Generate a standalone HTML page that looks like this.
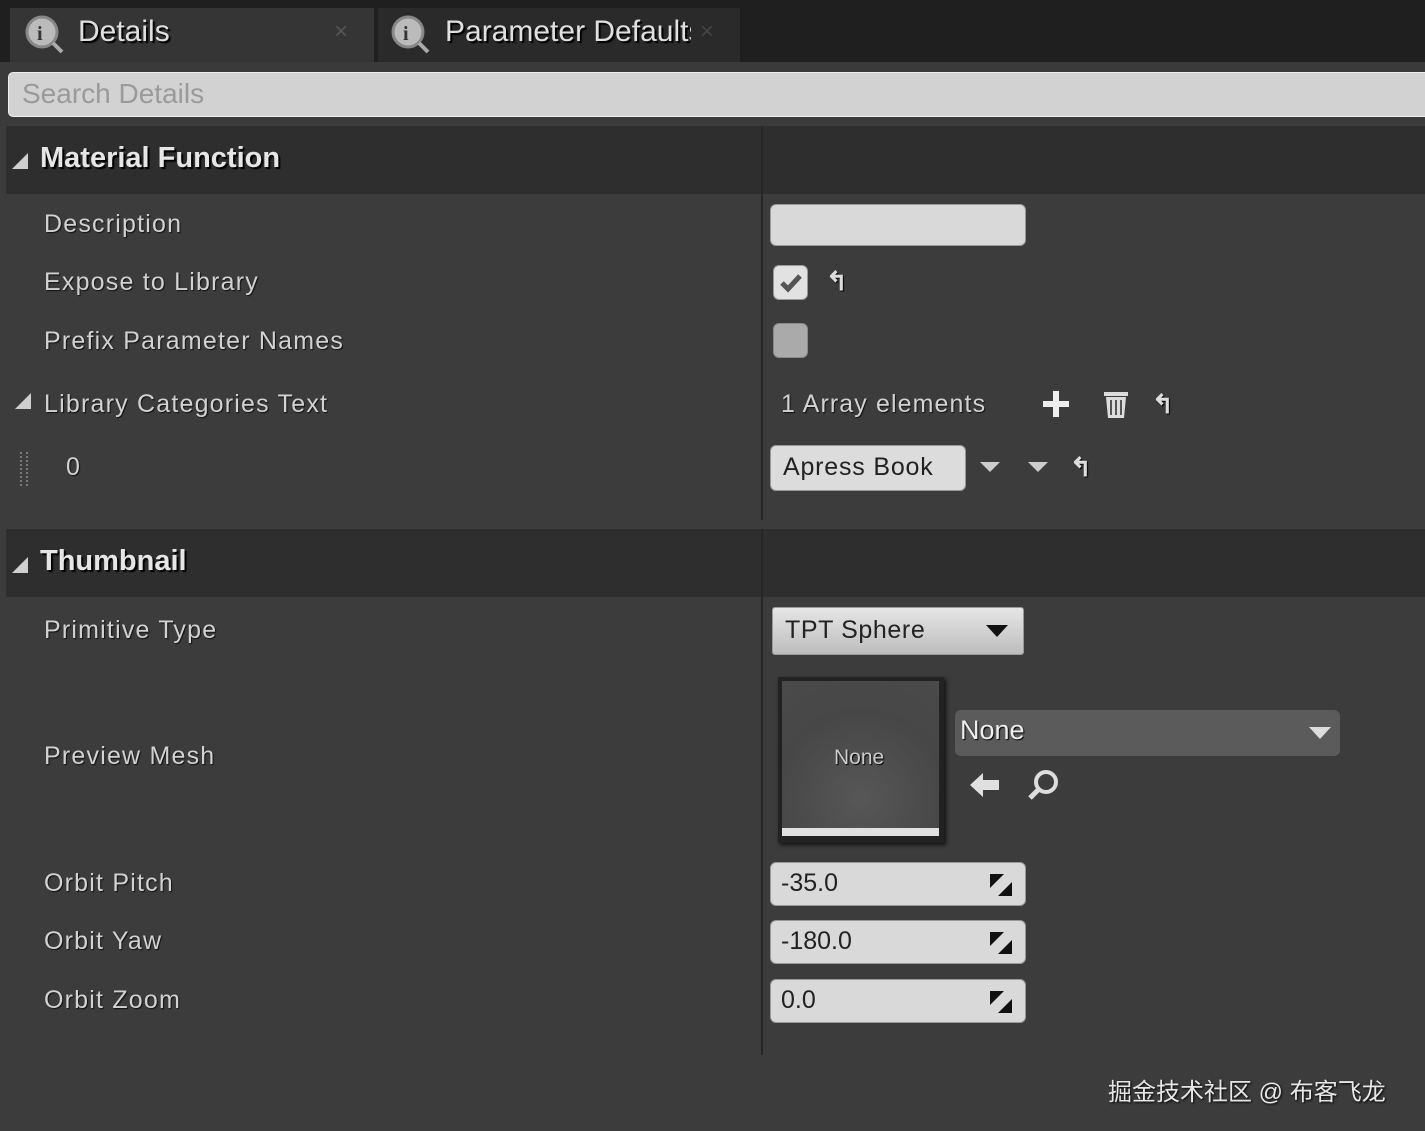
<!DOCTYPE html>
<html><head><meta charset="utf-8"><style>
*{margin:0;padding:0;box-sizing:border-box}
body{width:1425px;height:1131px;background:#3c3c3c;font-family:"Liberation Sans","Noto Sans CJK SC",sans-serif;position:relative;overflow:hidden;color:#d6d6d6}
.a{position:absolute}
.lbl{position:absolute;left:44px;font-size:25px;letter-spacing:1.2px;color:#d2d2d2;text-shadow:1px 1px 1px #111}
.hdr{position:absolute;left:6px;width:1419px;height:68px;background:#2e2e2e}
.hdr span{position:absolute;left:34px;top:16px;font-size:29px;font-weight:bold;color:#e6e6e6;text-shadow:2px 2px 1px #000}
.tri{position:absolute;width:0;height:0;border-left:16px solid transparent;border-bottom:16px solid #cfcfcf}
.box{position:absolute;background:#d9d9d9;border-radius:6px;border:1px solid #999;color:#222;font-size:25px}
.num .arr{position:absolute;right:12px;top:10px}
.rst{position:absolute;font-size:26px;font-weight:bold;color:#ddd;text-shadow:1px 1px 1px #000}
</style></head><body>
<div class="a" style="left:0;top:0;width:1425px;height:62px;background:#1f1f1f"></div>
<div class="a" style="left:10px;top:8px;width:364px;height:54px;background:#353535"></div>
<div class="a" style="left:378px;top:8px;width:362px;height:54px;background:#2a2a2a"></div>
<svg class="a" style="left:22px;top:12px" width="44" height="44"><circle cx="20" cy="20" r="15" fill="#bbb" stroke="#888" stroke-width="3"/><line x1="31" y1="31" x2="40" y2="40" stroke="#aaa" stroke-width="4"/><text x="15" y="28" font-size="20" font-weight="bold" fill="#333" font-family="Liberation Serif">i</text></svg>
<div class="a" style="left:78px;top:15px;font-size:30px;color:#e0e0e0;text-shadow:2px 2px 1px #000">Details</div>
<div class="a" style="left:334px;top:18px;font-size:24px;color:#555">×</div>
<svg class="a" style="left:388px;top:12px" width="44" height="44"><circle cx="20" cy="20" r="15" fill="#bbb" stroke="#888" stroke-width="3"/><line x1="31" y1="31" x2="40" y2="40" stroke="#aaa" stroke-width="4"/><text x="15" y="28" font-size="20" font-weight="bold" fill="#333" font-family="Liberation Serif">i</text></svg>
<div class="a" style="left:445px;top:15px;font-size:30px;color:#e0e0e0;text-shadow:2px 2px 1px #000;width:246px;overflow:hidden;white-space:nowrap">Parameter Defaults</div>
<div class="a" style="left:700px;top:18px;font-size:24px;color:#444">×</div>
<div class="a" style="left:0;top:62px;width:1425px;height:64px;background:#3a3a3a"></div>
<div class="a" style="left:8px;top:72px;width:1430px;height:45px;background:#d2d2d2;border-radius:5px;border:1px solid #eee"></div>
<div class="a" style="left:22px;top:78px;font-size:28px;color:#9a9a9a">Search Details</div>

<div class="hdr" style="top:126px"><div class="tri" style="left:6px;top:27px"></div><span>Material Function</span></div>
<div class="hdr" style="top:529px"><div class="tri" style="left:6px;top:28px"></div><span>Thumbnail</span></div>
<div class="a" style="left:761px;top:126px;width:2px;height:394px;background:#262626"></div>
<div class="a" style="left:761px;top:529px;width:2px;height:526px;background:#262626"></div>

<div class="lbl" style="top:210px">Description</div>
<div class="lbl" style="top:268px">Expose to Library</div>
<div class="lbl" style="top:327px">Prefix Parameter Names</div>
<div class="tri" style="left:15px;top:393px"></div>
<div class="lbl" style="top:390px">Library Categories Text</div>
<div class="a" style="left:20px;top:452px;width:8px;height:34px;border-left:2px dotted #777;border-right:2px dotted #777"></div>
<div class="lbl" style="left:66px;top:453px">0</div>
<div class="lbl" style="top:616px">Primitive Type</div>
<div class="lbl" style="top:742px">Preview Mesh</div>
<div class="lbl" style="top:869px">Orbit Pitch</div>
<div class="lbl" style="top:927px">Orbit Yaw</div>
<div class="lbl" style="top:986px">Orbit Zoom</div>

<div class="box" style="left:770px;top:204px;width:256px;height:42px"></div>
<div class="box" style="left:773px;top:265px;width:35px;height:35px;background:#e2e2e2"><svg width="33" height="33"><path d="M8 17l6 6 12-13" stroke="#555" stroke-width="5" fill="none"/></svg></div>
<div class="rst" style="left:826px;top:266px">↰</div>
<div class="box" style="left:773px;top:323px;width:35px;height:35px;background:#aaa;border-color:#888"></div>
<div class="a" style="left:781px;top:390px;font-size:25px;letter-spacing:1.1px;color:#d2d2d2;text-shadow:1px 1px 1px #111">1 Array elements</div>
<svg class="a" style="left:1040px;top:388px" width="32" height="32"><path d="M16 3v26M3 16h26" stroke="#eee" stroke-width="6"/></svg>
<svg class="a" style="left:1101px;top:388px" width="30" height="32"><rect x="3" y="4" width="24" height="4" fill="#ddd"/><path d="M5 9h20l-2 21H7z" fill="#ddd"/><path d="M10 12v15M15 12v15M20 12v15" stroke="#555" stroke-width="2"/></svg>
<div class="rst" style="left:1152px;top:389px">↰</div>
<div class="box" style="left:770px;top:445px;width:196px;height:46px;background:#dcdcdc"><span style="position:absolute;left:12px;top:7px;color:#222;letter-spacing:0.8px">Apress Book</span></div>
<svg class="a" style="left:978px;top:460px" width="24" height="14"><path d="M2 2h20l-10 10z" fill="#ccc"/></svg>
<svg class="a" style="left:1026px;top:460px" width="24" height="14"><path d="M2 2h20l-10 10z" fill="#ccc"/></svg>
<div class="rst" style="left:1070px;top:452px">↰</div>

<div class="box" style="left:772px;top:607px;width:252px;height:48px;background:linear-gradient(#e6e6e6,#bdbdbd);border-radius:3px"><span style="position:absolute;left:12px;top:8px;color:#222;letter-spacing:0.6px">TPT Sphere</span><svg style="position:absolute;right:14px;top:16px" width="24" height="14"><path d="M1 1h22l-11 12z" fill="#111"/></svg></div>
<div class="a" style="left:778px;top:677px;width:166px;height:166px;background:#222;box-shadow:2px 2px 4px #111"></div>
<div class="a" style="left:782px;top:681px;width:157px;height:147px;background:radial-gradient(circle at 50% 80%,#575757,#474747 60%,#4a4a4a)"></div>
<div class="a" style="left:782px;top:828px;width:157px;height:8px;background:#e0e0e0"></div>
<div class="a" style="left:834px;top:746px;font-size:21px;color:#ccc;text-shadow:1px 1px 1px #000">None</div>
<div class="a" style="left:955px;top:710px;width:385px;height:46px;background:#5b5b5b;border-radius:6px"></div>
<div class="a" style="left:960px;top:715px;font-size:27px;color:#eee;text-shadow:1px 1px 1px #000">None</div>
<svg class="a" style="left:1308px;top:726px" width="24" height="14"><path d="M1 1h22l-11 12z" fill="#ddd"/></svg>
<svg class="a" style="left:968px;top:770px" width="34" height="30"><path d="M2 15l13-12v7h16v10H15v7z" fill="#e0e0e0"/></svg>
<svg class="a" style="left:1026px;top:768px" width="34" height="34"><circle cx="20" cy="14" r="10" stroke="#ddd" stroke-width="4" fill="none"/><line x1="13" y1="21" x2="4" y2="30" stroke="#ddd" stroke-width="5"/></svg>

<div class="box num" style="left:770px;top:862px;width:256px;height:44px"><span style="position:absolute;left:10px;top:6px">-35.0</span><svg class="arr" width="24" height="24"><path d="M1 1h14L1 15z M23 23H9L23 9z" fill="#111"/></svg></div>
<div class="box num" style="left:770px;top:920px;width:256px;height:44px"><span style="position:absolute;left:10px;top:6px">-180.0</span><svg class="arr" width="24" height="24"><path d="M1 1h14L1 15z M23 23H9L23 9z" fill="#111"/></svg></div>
<div class="box num" style="left:770px;top:979px;width:256px;height:44px"><span style="position:absolute;left:10px;top:6px">0.0</span><svg class="arr" width="24" height="24"><path d="M1 1h14L1 15z M23 23H9L23 9z" fill="#111"/></svg></div>

<div class="a" style="left:1108px;top:1072px;font-size:24px;color:#e6e6e6;text-shadow:1px 1px 2px #000">掘金技术社区 @ 布客飞龙</div>
</body></html>
